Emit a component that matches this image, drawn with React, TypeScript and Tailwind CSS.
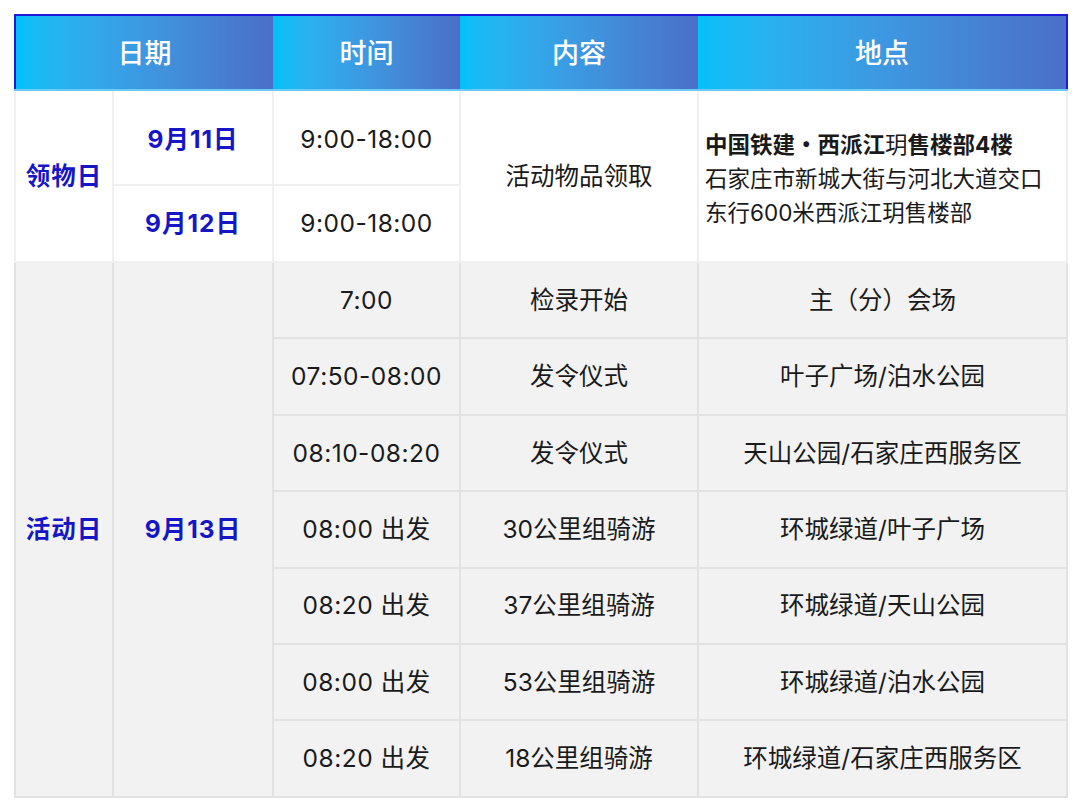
const font = { fontFamily: 'Inter, "Noto Sans CJK SC", "Noto Sans", sans-serif' };

const schedule = [
  { time: '7:00', content: '检录开始', place: '主（分）会场' },
  { time: '07:50-08:00', content: '发令仪式', place: '叶子广场/泊水公园' },
  { time: '08:10-08:20', content: '发令仪式', place: '天山公园/石家庄西服务区' },
  { time: '08:00 出发', content: '30公里组骑游', place: '环城绿道/叶子广场' },
  { time: '08:20 出发', content: '37公里组骑游', place: '环城绿道/天山公园' },
  { time: '08:00 出发', content: '53公里组骑游', place: '环城绿道/泊水公园' },
  { time: '08:20 出发', content: '18公里组骑游', place: '环城绿道/石家庄西服务区' },
];

function Th({ children, span = 1 }: { children: React.ReactNode; span?: number }) {
  return (
    <th
      colSpan={span}
      className="h-[75px] bg-gradient-to-r from-[#00c1f9] to-[#4a6fc8] border-b-2 border-[#6ccaf6] p-0 pt-[3px] text-[27px] font-medium text-white text-center align-middle"
    >
      {children}
    </th>
  );
}

export default function App() {
  const wCell = 'border-2 border-[#f0f0f0] text-center align-middle p-0';
  const gCell = 'border-2 border-[#e2e2e2] text-center align-middle p-0';
  const blue = 'font-bold text-[#1616c4] tracking-[1px]';

  return (
    <div className="w-[1080px] h-[811px] bg-white pt-[14px] pl-[14px]" style={font}>
      <table className="w-[1052px] border-collapse table-fixed border-2 border-[#1c1cd8] text-[#1a1a1a]">
        <colgroup>
          <col className="w-[98px]" />
          <col className="w-[160px]" />
          <col className="w-[187px]" />
          <col className="w-[238px]" />
          <col className="w-[369px]" />
        </colgroup>
        <thead>
          <tr>
            <Th span={2}>日期</Th>
            <Th>时间</Th>
            <Th>内容</Th>
            <Th>地点</Th>
          </tr>
        </thead>
        <tbody className="text-[24.5px]">
          <tr className="h-[95px] bg-white">
            <td rowSpan={2} className={`${wCell} ${blue}`}>领物日</td>
            <td className={`${wCell} ${blue} pt-[4px]`}>9月11日</td>
            <td className={`${wCell} pt-[4px] tracking-[0.5px]`}>9:00-18:00</td>
            <td rowSpan={2} className={wCell}>活动物品领取</td>
            <td rowSpan={2} className={`${wCell} text-left pl-[6px] pt-[6px] text-[22.5px] leading-[34px]`}>
              <div className="font-bold whitespace-nowrap">中国铁建・西派江<span className="font-normal">玥</span>售楼部4楼</div>
              <div className="whitespace-nowrap">石家庄市新城大街与河北大道交口</div>
              <div>东行600米西派江玥售楼部</div>
            </td>
          </tr>
          <tr className="h-[77px] bg-white">
            <td className={`${wCell} ${blue}`}>9月12日</td>
            <td className={`${wCell} tracking-[0.5px]`}>9:00-18:00</td>
          </tr>
          {schedule.map((r, i) => (
            <tr key={i} className="h-[76.4px] bg-[#f2f2f2]">
              {i === 0 && (
                <>
                  <td rowSpan={7} className={`${gCell} ${blue}`}>活动日</td>
                  <td rowSpan={7} className={`${gCell} ${blue}`}>9月13日</td>
                </>
              )}
              <td className={`${gCell} tracking-[0.5px]`}>{r.time}</td>
              <td className={gCell}>{r.content}</td>
              <td className={gCell}>{r.place}</td>
            </tr>
          ))}
        </tbody>
      </table>
    </div>
  );
}
